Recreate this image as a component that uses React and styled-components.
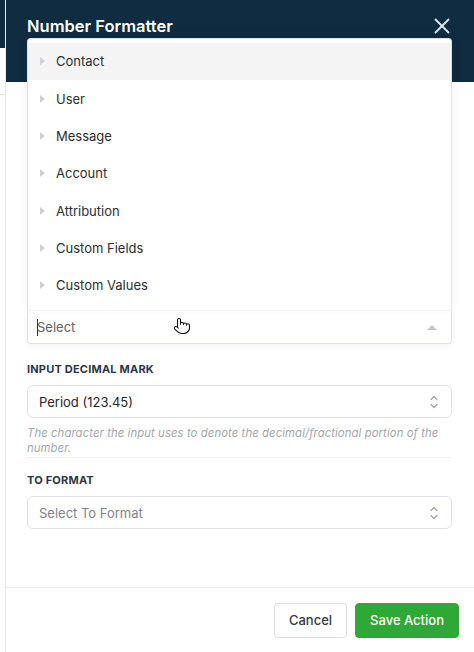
import React from 'react'
import styled, { createGlobalStyle } from 'styled-components'
import { X, Pointer } from 'lucide-react'

const GlobalStyle = createGlobalStyle`
    body {
        margin: 0;
        font-family: Inter, "Noto Sans", sans-serif;
        background: #fff;
    }
`

const menuItems = ['Contact', 'User', 'Message', 'Account', 'Attribution', 'Custom Fields', 'Custom Values']

const Page = styled.div`
    display: flex;
    width: 474px;
    height: 652px;
    overflow: hidden;
`

const LeftEdge = styled.div`
    width: 5px;
    display: flex;
    flex-direction: column;
`

const EdgeTop = styled.div`
    height: 48px;
    background: #0f2c40;
`

const EdgeTab = styled.div`
    height: 46px;
    border-bottom: 1px solid #e4e6ea;
`

const Drawer = styled.div`
    flex: 1;
    display: flex;
    flex-direction: column;
    border-left: 1px solid #e6e8eb;
`

const Header = styled.div`
    height: 82px;
    background: #0f2c40;
    display: flex;
    justify-content: space-between;
    align-items: flex-start;
    padding: 14px 19px 0 21px;
    box-sizing: border-box;
`

const Title = styled.h1`
    margin: 0;
    font-size: 16.5px;
    font-weight: 600;
    color: #fff;
    line-height: 24px;
`

const CloseButton = styled.button`
    border: none;
    background: none;
    padding: 0;
    color: #dce7f2;
    display: flex;
    margin-top: -1px;
`

const Body = styled.div`
    flex: 1;
    padding: 229px 22px 0 21px;
    display: flex;
    flex-direction: column;
`

const FieldWrap = styled.div`
    position: relative;
`

const Menu = styled.ul`
    position: absolute;
    left: 0;
    right: 0;
    bottom: 100%;
    margin: 0;
    padding: 4px 0 6px;
    list-style: none;
    background: #fff;
    border: 1px solid #dfe2e7;
    border-bottom: 1px solid #f0f1f3;
    border-radius: 4px 4px 0 0;
    box-shadow: 0 -2px 10px rgba(0, 0, 0, 0.06);
    z-index: 2;
`

const MenuItem = styled.li`
    height: 37.33px;
    display: flex;
    align-items: center;
    padding-left: 12px;
    gap: 11px;
    font-size: 13px;
    color: #2b2e33;
    background: ${p => (p.active ? '#f4f4f5' : '#fff')};
`

const Caret = styled.span`
    width: 0;
    height: 0;
    border-top: 4px solid transparent;
    border-bottom: 4px solid transparent;
    border-left: 5px solid #cfd1d4;
`

const OpenField = styled.div`
    height: 32px;
    display: flex;
    align-items: center;
    padding: 0 14px 0 9px;
    border: 1px solid #dfe2e7;
    border-top: none;
    border-radius: 0 0 4px 4px;
    box-shadow: 0 3px 6px rgba(0, 0, 0, 0.04);
    font-size: 13px;
    color: #5f636a;
    position: relative;
`

const TextCursor = styled.span`
    width: 1px;
    height: 17px;
    background: #333;
    margin-right: -1px;
`

const Placeholder = styled.span`
    flex: 1;
`

const UpTriangle = styled.span`
    width: 0;
    height: 0;
    border-left: 5px solid transparent;
    border-right: 5px solid transparent;
    border-bottom: 5px solid #c4c7cc;
`

const HandCursor = styled.span`
    position: absolute;
    left: 145px;
    top: 6px;
    display: flex;
    color: #111;
`

const Label = styled.div`
    font-size: 11px;
    font-weight: 700;
    letter-spacing: 0.2px;
    color: #2d3646;
    text-transform: uppercase;
    margin-top: ${p => p.top || 18}px;
    margin-bottom: 9px;
`

const SelectBox = styled.div`
    height: 33px;
    box-sizing: border-box;
    display: flex;
    align-items: center;
    justify-content: space-between;
    padding: 0 12px 0 11px;
    border: 1px solid #dfe2e7;
    border-radius: 6px;
    font-size: 13px;
    color: ${p => (p.placeholder ? '#80858d' : '#23272e')};
`

const HelpText = styled.p`
    margin: 8px 0 0;
    font-size: 11.3px;
    font-style: italic;
    line-height: 15px;
    letter-spacing: 0.1px;
    color: #a3a7ae;
    padding-bottom: 1px;
    border-bottom: 1px solid #f0f1f3;
`

const Footer = styled.div`
    height: 64px;
    border-top: 1px solid #e6e8eb;
    display: flex;
    justify-content: flex-end;
    align-items: center;
    gap: 8px;
    padding: 0 15px 0 0;
`

const Button = styled.button`
    height: 35px;
    padding: 0 ${p => (p.primary ? 14 : 14)}px;
    border-radius: 4px;
    font-family: Inter, "Noto Sans", sans-serif;
    font-size: 13px;
    font-weight: 500;
    border: 1px solid ${p => (p.primary ? '#2ea836' : '#dcdfe4')};
    background: ${p => (p.primary ? '#2ea836' : '#fff')};
    color: ${p => (p.primary ? '#fff' : '#343a40')};
`

const UpDownIcon = () => (
    <svg width='10' height='16' viewBox='0 0 10 16' fill='none' stroke='#9ea3aa' strokeWidth='1.2' strokeLinecap='round' strokeLinejoin='round'>
        <path d='M2 5.5 5 2.5 8 5.5' />
        <path d='M2 10.5 5 13.5 8 10.5' />
    </svg>
)

const App = () => {
    return (
        <Page>
            <GlobalStyle />
            <LeftEdge>
                <EdgeTop />
                <EdgeTab />
            </LeftEdge>
            <Drawer>
                <Header>
                    <Title>Number Formatter</Title>
                    <CloseButton><X size={26} strokeWidth={1.7} /></CloseButton>
                </Header>
                <Body>
                    <FieldWrap>
                        <Menu>
                            {menuItems.map((item, i) => (
                                <MenuItem key={item} active={i === 0}>
                                    <Caret />
                                    {item}
                                </MenuItem>
                            ))}
                        </Menu>
                        <OpenField>
                            <TextCursor />
                            <Placeholder>Select</Placeholder>
                            <UpTriangle />
                            <HandCursor><Pointer size={18} strokeWidth={1.4} fill='#fff' /></HandCursor>
                        </OpenField>
                    </FieldWrap>
                    <Label>Input Decimal Mark</Label>
                    <SelectBox>
                        Period (123.45)
                        <UpDownIcon />
                    </SelectBox>
                    <HelpText>The character the input uses to denote the decimal/fractional portion of the number.</HelpText>
                    <Label top={15}>To Format</Label>
                    <SelectBox placeholder>
                        Select To Format
                        <UpDownIcon />
                    </SelectBox>
                </Body>
                <Footer>
                    <Button>Cancel</Button>
                    <Button primary>Save Action</Button>
                </Footer>
            </Drawer>
        </Page>
    )
}

export default App
